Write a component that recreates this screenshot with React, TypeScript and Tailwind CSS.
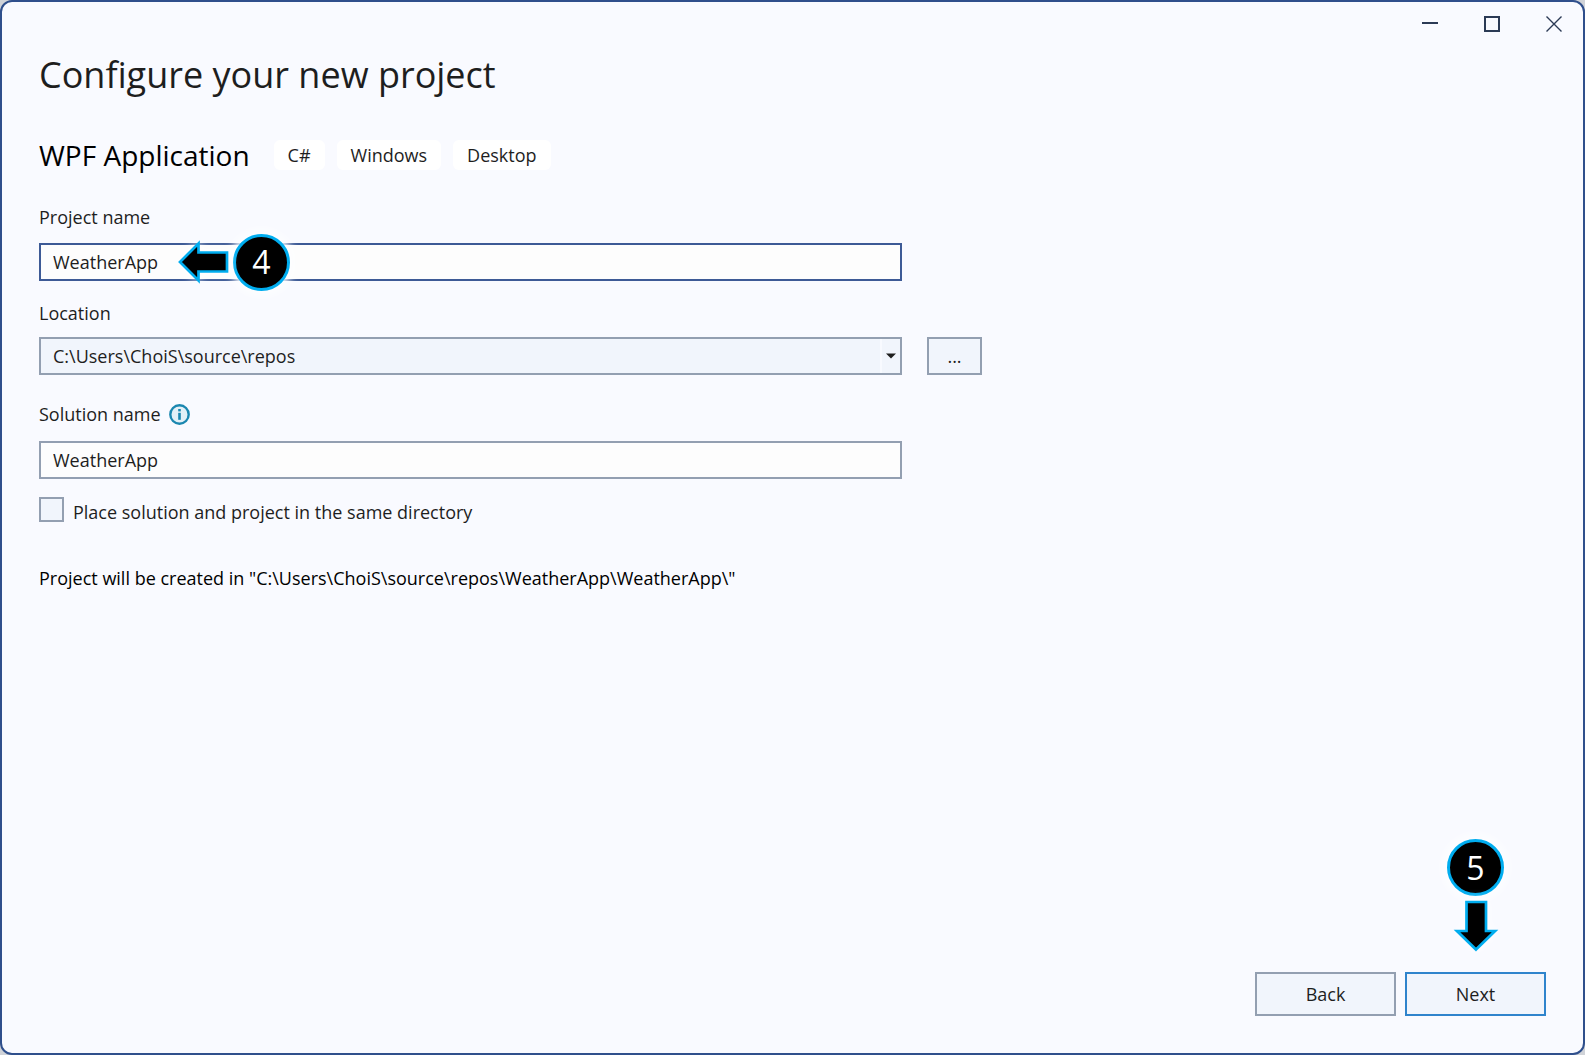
import React, { useState } from 'react';

const tags = ['C#', 'Windows', 'Desktop'];

const fieldBase = 'block w-full h-[38px] border-2 px-3 rounded-none outline-none';

const InfoIcon = () => (
  <svg width="21" height="21" viewBox="0 0 21 21" aria-hidden="true">
    <circle cx="10.5" cy="10.5" r="9.2" fill="#e3f0f7" stroke="#1b87b0" strokeWidth="2.4" />
    <rect x="9.2" y="5" width="2.6" height="2.4" fill="#1b87b0" />
    <rect x="9.2" y="8.8" width="2.6" height="7" fill="#1b87b0" />
  </svg>
);

const StepBadge = ({ children }: { children: React.ReactNode }) => (
  <span className="flex items-center justify-center w-[57px] h-[57px] rounded-full border-3 border-[#00adef] bg-black text-white text-[32px] leading-none shadow-[0_0_8px_4px_#fdfeff]">
    {children}
  </span>
);

const ArrowLeft = () => (
  <svg width="52" height="46" viewBox="0 0 52 46" className="drop-shadow-[0_0_5px_#ffffff]" aria-hidden="true">
    <path d="M3 23 L21.5 4.5 V13.5 H50 V32.5 H21.5 V41.5 Z" fill="#000" stroke="#00adef" strokeWidth="2.7" />
  </svg>
);

const ArrowDown = () => (
  <svg width="46" height="52" viewBox="0 0 46 52" className="drop-shadow-[0_0_5px_#ffffff]" aria-hidden="true">
    <path d="M23 49.5 L42 31 H33 V2 H13.5 V31 H4 Z" fill="#000" stroke="#00adef" strokeWidth="2.7" />
  </svg>
);

export default function App() {
  const [projectName, setProjectName] = useState('WeatherApp');
  const [solutionName, setSolutionName] = useState('WeatherApp');
  const [sameDir, setSameDir] = useState(false);

  return (
    <div className="min-h-screen flex bg-[#d0d3d8] text-[#1e1e1e] text-[18px] leading-6 font-['Open_Sans',sans-serif]">
      <div className="relative flex-1 flex flex-col bg-[#f9faff] border-2 border-[#2f4f8c] rounded-xl">
        <div className="flex justify-end gap-[46px] pt-[14px] pr-[21px] text-[#2b3a55]">
          <button type="button" aria-label="Minimize">
            <svg width="16" height="16" viewBox="0 0 16 16"><path d="M0 7H16" stroke="currentColor" strokeWidth="2" /></svg>
          </button>
          <button type="button" aria-label="Maximize">
            <svg width="16" height="16" viewBox="0 0 16 16"><rect x="1" y="1" width="14" height="14" fill="none" stroke="currentColor" strokeWidth="2" /></svg>
          </button>
          <button type="button" aria-label="Close">
            <svg width="16" height="16" viewBox="0 0 16 16"><path d="M0.5 0.5L15.5 15.5M15.5 0.5L0.5 15.5" stroke="currentColor" strokeWidth="1.4" /></svg>
          </button>
        </div>

        <main className="flex-1 flex flex-col px-[37px] pt-[19px] pb-[37px]">
          <h1 className="text-[36px] leading-[48px]">Configure your new project</h1>

          <div className="flex items-center gap-3 mt-[38px] text-black">
            <h2 className="text-[28px] leading-9 mr-3">WPF Application</h2>
            {tags.map((tag) => (
              <span key={tag} className="h-[30px] px-[14px] rounded-md bg-white leading-[30px] text-[#1e1e1e]">{tag}</span>
            ))}
          </div>

          <div className="max-w-[863px]">
            <label htmlFor="project-name" className="block mt-8">Project name</label>
            <div className="relative mt-[14px]">
              <input
                id="project-name"
                value={projectName}
                onChange={(e) => setProjectName(e.target.value)}
                className={`${fieldBase} border-[#3d5a96] bg-[#fdfdfd]`}
              />
              <div className="absolute left-[138px] inset-y-0 flex items-center gap-1">
                <ArrowLeft />
                <StepBadge>4</StepBadge>
              </div>
            </div>

            <label htmlFor="location" className="block mt-5">Location</label>
          </div>

          <div className="flex gap-[25px] mt-3">
            <div className="relative w-full max-w-[863px]">
              <select id="location" className={`${fieldBase} appearance-none border-[#939fb1] bg-[#f1f5fc]`}>
                <option>C:\Users\ChoiS\source\repos</option>
              </select>
              <div className="absolute right-0.5 inset-y-0.5 w-5 flex items-center justify-center border-l-2 border-[#f8faff] pointer-events-none">
                <svg width="10" height="6" viewBox="0 0 10 6" aria-hidden="true"><path d="M0 0.5H10L5 5.5Z" fill="#1e1e1e" /></svg>
              </div>
            </div>
            <button type="button" className="w-[55px] h-[38px] border-2 border-[#939fb1] bg-[#f1f5fc]">...</button>
          </div>

          <div className="max-w-[863px]">
            <div className="flex items-center gap-2 mt-[27px]">
              <label htmlFor="solution-name">Solution name</label>
              <InfoIcon />
            </div>
            <input
              id="solution-name"
              value={solutionName}
              onChange={(e) => setSolutionName(e.target.value)}
              className={`${fieldBase} mt-[15px] border-[#939fb1] bg-[#fdfdfd]`}
            />
            <div className="flex items-start gap-[9px] mt-[18px]">
              <input
                id="same-dir"
                type="checkbox"
                checked={sameDir}
                onChange={(e) => setSameDir(e.target.checked)}
                className="appearance-none w-[25px] h-[25px] border-2 border-[#939fb1] bg-[#f1f5fc] checked:bg-[#2f4f8c]"
              />
              <label htmlFor="same-dir" className="leading-[30px]">Place solution and project in the same directory</label>
            </div>
          </div>

          <p className="mt-[39px] text-black">Project will be created in "C:\Users\ChoiS\source\repos\WeatherApp\WeatherApp\"</p>

          <div className="mt-auto flex justify-end gap-[9px]">
            <button type="button" className="w-[141px] h-[44px] border-2 border-[#939fb1] bg-[#f1f5fc]">Back</button>
            <div className="relative">
              <button type="button" className="w-[141px] h-[44px] border-2 border-[#2f84cc] bg-[#f1f5fc]">Next</button>
              <div className="absolute inset-x-0 bottom-full mb-5 flex flex-col items-center gap-1">
                <StepBadge>5</StepBadge>
                <ArrowDown />
              </div>
            </div>
          </div>
        </main>
      </div>
    </div>
  );
}
